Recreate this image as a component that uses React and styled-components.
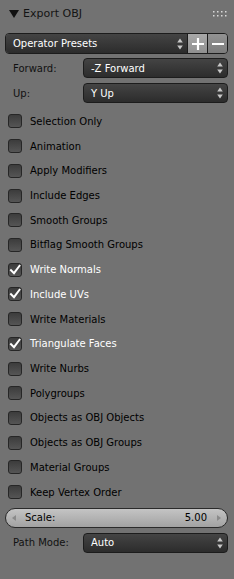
import React from "react";
import styled, { createGlobalStyle, css } from "styled-components";

const Global = createGlobalStyle`
  html, body { margin: 0; padding: 0; background: #727272; }
  body { font-family: "DejaVu Sans", sans-serif; font-size: 10px; }
  * { box-sizing: border-box; }
`;

const Panel = styled.div`
  width: 234px;
  height: 579px;
  background: #727272;
  display: flex;
  flex-direction: column;
  padding: 0 6px 0 5px;
  color: #000;
`;

const Header = styled.div`
  height: 27px;
  display: flex;
  align-items: center;
  padding-left: 4px;
  font-size: 11px;
  color: #141414;
`;

const Triangle = styled.span`
  width: 0;
  height: 0;
  border-left: 5px solid transparent;
  border-right: 5px solid transparent;
  border-top: 8px solid #111;
  margin-right: 4px;
  margin-top: 1px;
`;

const Title = styled.span`
  flex: 1;
`;

const Grip = styled.svg`
  margin-right: 1px;
`;

const PresetRow = styled.div`
  margin-top: 6px;
  height: 21px;
  display: flex;
  border: 1px solid #1c1c1c;
  border-radius: 4px;
  overflow: hidden;
`;

const darkField = css`
  background: linear-gradient(#444444, #2c2c2c);
  color: #fff;
`;

const PresetSelect = styled.div`
  ${darkField};
  flex: 1;
  display: flex;
  align-items: center;
  padding-left: 7px;
  font-size: 10px;
`;

const SquareButton = styled.div`
  width: 20px;
  display: flex;
  align-items: center;
  justify-content: center;
  border-left: 1px solid #1c1c1c;
  background: ${(p) => (p.$light ? "linear-gradient(#a8a8a8, #909090)" : "linear-gradient(#929292, #7c7c7c)")};
`;

const FieldRow = styled.div`
  height: ${(p) => p.$h || 20}px;
  margin-top: ${(p) => p.$mt || 0}px;
  display: flex;
  align-items: center;
`;

const FieldLabel = styled.div`
  width: 78px;
  padding-left: 8px;
  color: #111;
`;

const Dropdown = styled.div`
  ${darkField};
  flex: 1;
  height: 100%;
  border: 1px solid #1c1c1c;
  border-radius: 4px;
  display: flex;
  align-items: center;
  padding-left: 7px;
`;

const DropText = styled.span`
  flex: 1;
`;

const Arrows = styled.svg`
  margin-right: 4px;
`;

const Options = styled.div`
  margin-top: 6px;
  display: flex;
  flex-direction: column;
`;

const CheckRow = styled.div`
  height: 24.73px;
  display: flex;
  align-items: center;
  padding-left: 3px;
  color: ${(p) => (p.$on ? "#fff" : "#000")};
`;

const Box = styled.div`
  width: 14px;
  height: 14px;
  border: 1px solid #262626;
  border-radius: 3px;
  background: linear-gradient(#3c3c3c, #555555);
  margin-right: 8px;
  display: flex;
  align-items: center;
  justify-content: center;
`;

const Slider = styled.div`
  margin-top: 3px;
  height: 20px;
  border: 1px solid #2a2a2a;
  border-radius: 10px;
  background: linear-gradient(#c4c4c4, #a2a2a2);
  display: flex;
  align-items: center;
  padding: 0 6px;
  color: #000;
`;

const SliderText = styled.span`
  flex: 1;
  padding-left: 9px;
`;

const SliderValue = styled.span`
  padding-right: 10px;
`;

const ArrowsIcon = () => (
  <Arrows width="6" height="12" viewBox="0 0 6 12">
    <path d="M3 0.5 L5.8 4.5 L0.2 4.5 Z" fill="#c8c8c8" />
    <path d="M3 11.5 L5.8 7.5 L0.2 7.5 Z" fill="#c8c8c8" />
  </Arrows>
);

const Check = () => (
  <svg width="12" height="12" viewBox="0 0 12 12">
    <path d="M2 6.2 L5 9.2 L10.5 1.8" stroke="#fff" strokeWidth="2" fill="none" strokeLinecap="square" />
  </svg>
);

const options = [
  ["Selection Only", false],
  ["Animation", false],
  ["Apply Modifiers", false],
  ["Include Edges", false],
  ["Smooth Groups", false],
  ["Bitflag Smooth Groups", false],
  ["Write Normals", true],
  ["Include UVs", true],
  ["Write Materials", false],
  ["Triangulate Faces", true],
  ["Write Nurbs", false],
  ["Polygroups", false],
  ["Objects as OBJ Objects", false],
  ["Objects as OBJ Groups", false],
  ["Material Groups", false],
  ["Keep Vertex Order", false],
];

export default function App() {
  return (
    <>
      <Global />
      <Panel>
        <Header>
          <Triangle />
          <Title>Export OBJ</Title>
          <Grip width="14" height="6" viewBox="0 0 14 6">
            {[0, 4, 8, 12].map((x) =>
              [0, 4].map((y) => <rect key={`${x}-${y}`} x={x} y={y} width="1.5" height="1.5" fill="#d8d8d8" />)
            )}
          </Grip>
        </Header>
        <PresetRow>
          <PresetSelect>
            <DropText>Operator Presets</DropText>
            <ArrowsIcon />
          </PresetSelect>
          <SquareButton $light>
            <svg width="14" height="14" viewBox="0 0 14 14">
              <path d="M7 1 V13 M1 7 H13" stroke="#fff" strokeWidth="2.2" />
            </svg>
          </SquareButton>
          <SquareButton>
            <svg width="14" height="14" viewBox="0 0 14 14">
              <path d="M1 7 H13" stroke="#fff" strokeWidth="2.2" />
            </svg>
          </SquareButton>
        </PresetRow>
        <FieldRow $mt={4}>
          <FieldLabel>Forward:</FieldLabel>
          <Dropdown>
            <DropText>-Z Forward</DropText>
            <ArrowsIcon />
          </Dropdown>
        </FieldRow>
        <FieldRow $mt={5}>
          <FieldLabel>Up:</FieldLabel>
          <Dropdown>
            <DropText>Y Up</DropText>
            <ArrowsIcon />
          </Dropdown>
        </FieldRow>
        <Options>
          {options.map(([label, on]) => (
            <CheckRow key={label} $on={on}>
              <Box>{on && <Check />}</Box>
              {label}
            </CheckRow>
          ))}
        </Options>
        <Slider>
          <svg width="4" height="6" viewBox="0 0 4 6">
            <path d="M0 3 L4 0 L4 6 Z" fill="#8a8a8a" />
          </svg>
          <SliderText>Scale:</SliderText>
          <SliderValue>5.00</SliderValue>
          <svg width="4" height="6" viewBox="0 0 4 6">
            <path d="M4 3 L0 0 L0 6 Z" fill="#8a8a8a" />
          </svg>
        </Slider>
        <FieldRow $mt={5}>
          <FieldLabel>Path Mode:</FieldLabel>
          <Dropdown>
            <DropText>Auto</DropText>
            <ArrowsIcon />
          </Dropdown>
        </FieldRow>
      </Panel>
    </>
  );
}
